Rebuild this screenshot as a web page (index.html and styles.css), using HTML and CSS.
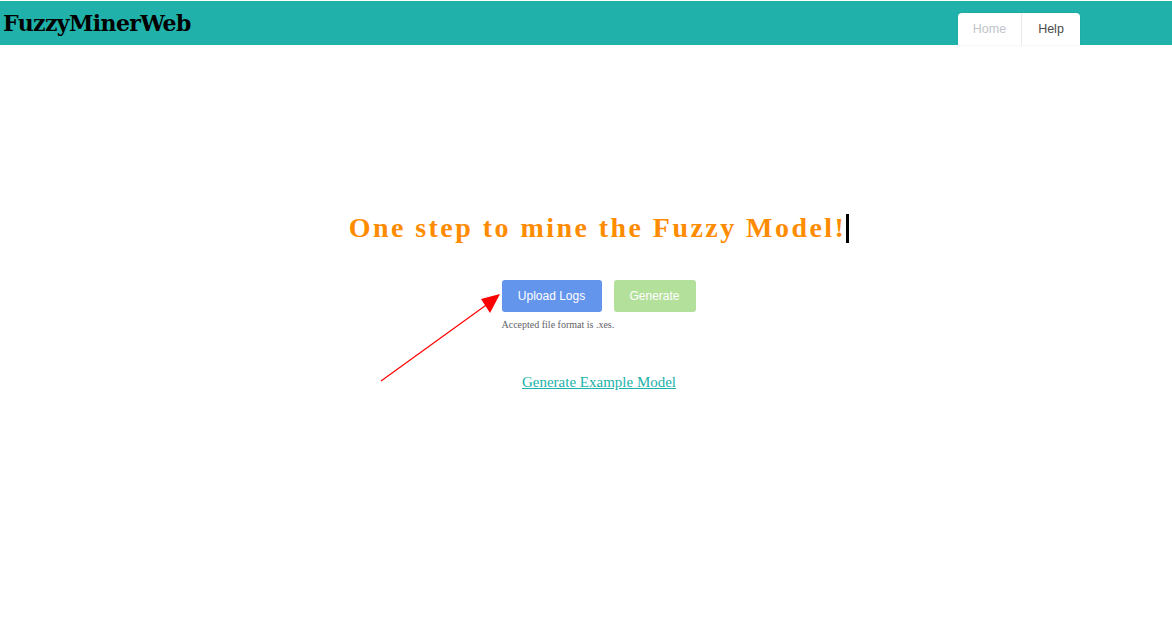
FILE: index.html
```html
<!DOCTYPE html>
<html>
<head>
<meta charset="utf-8">
<link rel="stylesheet" href="styles.css">
</head>
<body>
<header class="topbar">
  <div class="brand">FuzzyMinerWeb</div>
  <nav class="menu">
    <a class="menu-item muted">Home</a>
    <a class="menu-item active">Help</a>
  </nav>
</header>
<main class="main">
  <h1 class="headline">One step to mine the Fuzzy Model!<span class="cursor"></span></h1>
  <div class="actions">
    <div class="upload">
      <div class="btn-row">
        <button class="btn btn-blue">Upload Logs</button>
        <button class="btn btn-green">Generate</button>
      </div>
      <div class="tip">Accepted file format is .xes.</div>
    </div>
    <svg class="arrow" width="130" height="100" viewBox="0 0 130 100">
      <line x1="2" y1="88" x2="110" y2="10" stroke="#f00" stroke-width="1.2"/>
      <polygon points="121,1 102,6 111,20" fill="#f00"/>
    </svg>
  </div>
  <a class="example">Generate Example Model</a>
</main>
</body>
</html>
```
FILE: styles.css
```css
html, body {
  margin: 0;
  padding: 0;
  background: #fff;
}
body {
  width: 1172px;
  height: 634px;
  overflow: hidden;
  font-family: "Liberation Serif", serif;
}
.topbar {
  margin-top: 1px;
  height: 44px;
  background: #20b2aa;
  display: flex;
  align-items: flex-end;
  justify-content: space-between;
  box-sizing: border-box;
}
.brand {
  align-self: flex-start;
  font-family: "DejaVu Serif", serif;
  font-weight: bold;
  font-size: 22px;
  letter-spacing: -0.6px;
  color: #000;
  padding: 9px 0 0 3px;
}
.menu {
  display: flex;
  margin-right: 92px;
  background: #fff;
  border-radius: 4px 4px 0 0;
  height: 32px;
  box-shadow: 0 0 2px rgba(0, 0, 0, 0.12);
}
.menu-item {
  font-family: "Liberation Sans", sans-serif;
  font-size: 12.5px;
  display: flex;
  align-items: center;
  justify-content: center;
  height: 32px;
  box-sizing: border-box;
}
.menu-item.muted {
  width: 64px;
  color: #c0c4cc;
  border-right: 1px solid #e8e8e8;
}
.menu-item.active {
  width: 58px;
  color: #4a4a4a;
}
.main {
  display: flex;
  flex-direction: column;
  align-items: center;
}
.headline {
  margin: 166px 0 0 0;
  padding-left: 26px;
  font-family: "Liberation Serif", serif;
  font-weight: bold;
  font-size: 28px;
  letter-spacing: 2.45px;
  color: #ff8c00;
  display: flex;
  align-items: center;
  height: 34px;
}
.cursor {
  display: inline-block;
  width: 3px;
  height: 29px;
  background: #000;
  margin-left: 0;
}
.actions {
  margin-top: 35px;
  position: relative;
}
.upload {
  display: flex;
  flex-direction: column;
  margin-left: 25px;
}
.btn-row {
  display: flex;
  gap: 12px;
}
.btn {
  font-family: "Liberation Sans", sans-serif;
  font-size: 12px;
  color: #fff;
  border: none;
  border-radius: 3px;
  height: 32px;
  padding: 0;
}
.btn-blue {
  width: 100px;
  background: #6495ed;
}
.btn-green {
  width: 82px;
  background: #b3e09b;
}
.tip {
  margin-top: 7px;
  font-size: 10px;
  color: #606266;
}
.arrow {
  position: absolute;
  left: -98px;
  top: 13px;
}
.example {
  margin-top: 44px;
  margin-left: 26px;
  font-size: 15px;
  color: #20b2aa;
  text-decoration: underline;
}
```
